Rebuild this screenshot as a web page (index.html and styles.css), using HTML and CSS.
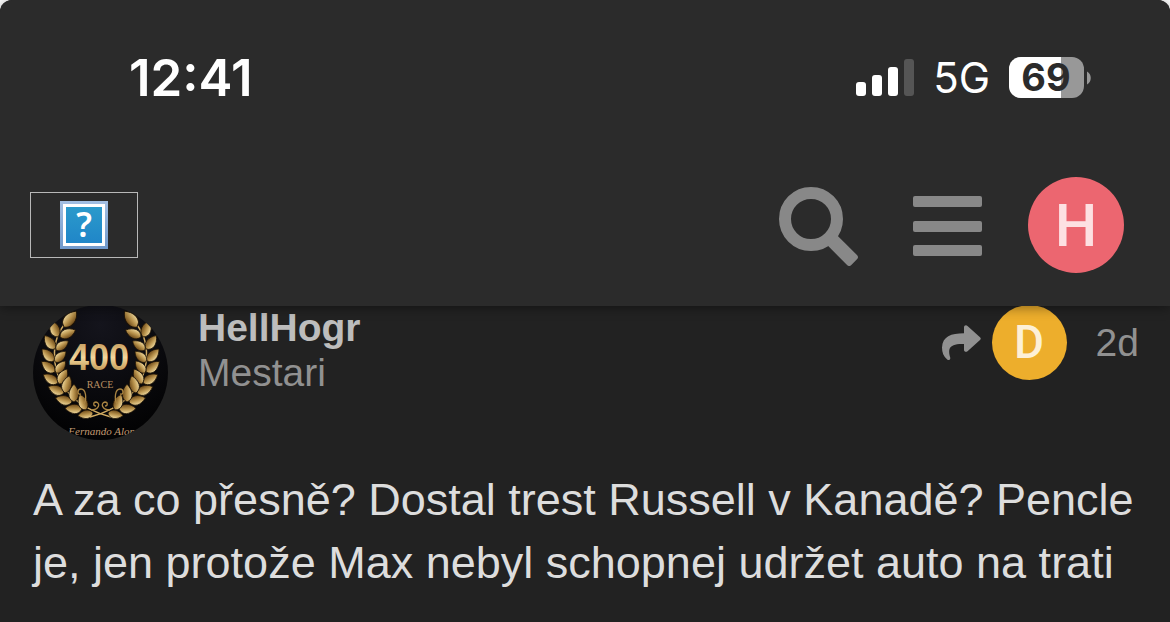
FILE: index.html
```html
<!DOCTYPE html>
<html lang="cs">
<head>
    <meta charset="UTF-8">
    <meta name="viewport" content="width=device-width, initial-scale=1.0">
    <title>HellHogr</title>
    <link rel="stylesheet" href="styles.css">
</head>
<body>
    <div class="page">
        <header class="header">
            <div class="status-bar">
                <span class="time">12:41</span>
                <div class="status-icons">
                    <svg class="signal" width="58" height="38" viewBox="0 0 58 38" aria-hidden="true">
                        <rect x="0" y="23" width="10" height="14" rx="3"/>
                        <rect x="16" y="16" width="10" height="21" rx="3"/>
                        <rect x="32" y="8" width="10" height="29" rx="3"/>
                        <rect class="signal-off" x="48" y="0" width="10" height="37" rx="3"/>
                    </svg>
                    <span class="network">5G</span>
                    <svg class="battery" width="82" height="42" viewBox="0 0 82 42">
                        <defs>
                            <clipPath id="batteryShape"><rect width="75" height="41" rx="12"/></clipPath>
                        </defs>
                        <g clip-path="url(#batteryShape)">
                            <rect width="75" height="41" fill="#989898"/>
                            <rect width="52" height="41" fill="#fff"/>
                        </g>
                        <path d="M78 14.500c5 2.500 5 10.500 0 13z" fill="#989898"/>
                        <text class="battery-level" x="37" y="34" text-anchor="middle">69</text>
                    </svg>
                </div>
            </div>
            <nav class="nav">
                <a class="logo" href="#" aria-label="Home">
                    <svg width="48" height="48" viewBox="0 0 48 48" aria-hidden="true">
                        <defs>
                            <linearGradient id="logoFrame" x1="0" y1="0" x2="0" y2="1">
                                <stop offset="0" stop-color="#a3bfe2"/>
                                <stop offset="1" stop-color="#7099cb"/>
                            </linearGradient>
                            <linearGradient id="logoFill" x1="0" y1="0" x2="0" y2="1">
                                <stop offset="0" stop-color="#2b9acb"/>
                                <stop offset="1" stop-color="#2086c8"/>
                            </linearGradient>
                        </defs>
                        <rect width="48" height="48" fill="url(#logoFrame)"/>
                        <rect x="3" y="3" width="42" height="42" fill="#fff"/>
                        <rect x="6" y="6" width="36" height="36" fill="url(#logoFill)"/>
                        <text class="logo-mark" x="24" y="36" text-anchor="middle">?</text>
                    </svg>
                </a>
                <div class="nav-actions">
                    <button class="icon-button" type="button" aria-label="Search">
                        <svg width="88" height="82" viewBox="0 0 88 82">
                            <circle cx="33" cy="35" r="26" fill="none" stroke="currentColor" stroke-width="12"/>
                            <rect x="29" y="-7" width="32" height="14" rx="3" transform="translate(33 35) rotate(45)" fill="currentColor"/>
                        </svg>
                    </button>
                    <button class="icon-button" type="button" aria-label="Menu">
                        <svg width="70" height="62" viewBox="0 0 70 62">
                            <rect x="1" y="2" width="69" height="11" rx="2" fill="currentColor"/>
                            <rect x="1" y="27" width="69" height="11" rx="2" fill="currentColor"/>
                            <rect x="1" y="51" width="69" height="11" rx="2" fill="currentColor"/>
                        </svg>
                    </button>
                    <button class="letter-avatar user" type="button">H</button>
                </div>
            </nav>
        </header>

        <article class="post">
            <div class="post-meta">
                <svg class="avatar" width="135" height="135" viewBox="0 0 135 135" role="img" aria-label="HellHogr">
                    <defs>
                        <clipPath id="avatarShape"><circle cx="67.500" cy="67.500" r="67.500"/></clipPath>
                        <clipPath id="captionShape"><rect x="32" y="115" width="71" height="20"/></clipPath>
                        <radialGradient id="avatarFill" cx=".5" cy=".15" r=".8">
                            <stop offset="0" stop-color="#14141c"/>
                            <stop offset="1" stop-color="#030304"/>
                        </radialGradient>
                        <linearGradient id="leafGold" x1="0" y1="0" x2="1" y2="0">
                            <stop offset="0" stop-color="#efd89c"/>
                            <stop offset=".5" stop-color="#b8924c"/>
                            <stop offset="1" stop-color="#6b4818"/>
                        </linearGradient>
                        <linearGradient id="numberGold" x1="0" y1="0" x2="0" y2="1">
                            <stop offset="0" stop-color="#b98a48"/>
                            <stop offset=".5" stop-color="#f2d79c"/>
                            <stop offset="1" stop-color="#a8752f"/>
                        </linearGradient>
                        <path id="leaf" d="M0 0C-7 -3 -6 -11 0 -17C6 -11 6 -3 0 0Z" fill="url(#leafGold)" stroke="#1d1307" stroke-width=".8"/>
                        <g id="branch">
                            <path d="M78 112C44 103 25 83 22 58C20 42 24 29 31 20" fill="none" stroke="#d1ab62" stroke-width="1.500"/>
                            <use href="#leaf" transform="translate(31 22) rotate(38) scale(1.200)"/>
                            <use href="#leaf" transform="translate(25 32) rotate(-22) scale(1.050)"/>
                            <use href="#leaf" transform="translate(27 32) rotate(66)"/>
                            <use href="#leaf" transform="translate(22 44) rotate(-38)"/>
                            <use href="#leaf" transform="translate(23 45) rotate(54) scale(.9)"/>
                            <use href="#leaf" transform="translate(21 56) rotate(-45)"/>
                            <use href="#leaf" transform="translate(22 57) rotate(46) scale(.9)"/>
                            <use href="#leaf" transform="translate(22 67) rotate(-52)"/>
                            <use href="#leaf" transform="translate(23 68) rotate(38) scale(.9)"/>
                            <use href="#leaf" transform="translate(25 78) rotate(-60)"/>
                            <use href="#leaf" transform="translate(26 79) rotate(28)"/>
                            <use href="#leaf" transform="translate(31 88) rotate(-68)"/>
                            <use href="#leaf" transform="translate(32 88) rotate(14) scale(1.050)"/>
                            <use href="#leaf" transform="translate(39 97) rotate(-76)"/>
                            <use href="#leaf" transform="translate(41 97) rotate(0) scale(1.050)"/>
                            <use href="#leaf" transform="translate(49 104) rotate(-88)"/>
                            <use href="#leaf" transform="translate(53 105) rotate(-22)"/>
                            <use href="#leaf" transform="translate(60 108) rotate(-100) scale(.9)"/>
                            <path d="M51 99C54 94 53 84 48 84C44 84 44 90 48 89M58 105C66 105 68 98 63 97C60 97 60 101 63 101" fill="none" stroke="#a98442" stroke-width="1.300"/>
                        </g>
                    </defs>
                    <g clip-path="url(#avatarShape)">
                        <rect width="135" height="135" fill="url(#avatarFill)"/>
                        <use href="#branch"/>
                        <use href="#branch" transform="translate(135 0) scale(-1 1)"/>
                        <text class="avatar-number" x="66" y="65" text-anchor="middle">400</text>
                        <text class="avatar-race" x="67" y="83" text-anchor="middle">RACE</text>
                        <g clip-path="url(#captionShape)">
                            <text class="avatar-caption" x="67" y="130" text-anchor="middle">y Fernando Alons</text>
                        </g>
                    </g>
                </svg>
                <div class="names">
                    <a class="username" href="#">HellHogr</a>
                    <span class="user-title">Mestari</span>
                </div>
                <div class="post-info">
                    <button class="reply-to" type="button" aria-label="Reply to D">
                        <svg width="40" height="36" viewBox="0 0 40 36">
                            <path d="M23 2.500C23 .5 25 -.3 26.500 1L39 12.200Q40.500 13.500 39 14.900L26.500 26.200C25 27.500 23 26.700 23 24.700V19C15 18.600 10 20 8.500 24C7.700 27 8.500 30 9.200 32.500C9.700 34.800 7.800 35.800 6.200 34.500C2.500 31.500 1 27.500 1 22.500C1.500 11.500 10 8.300 23 8.300Z" fill="currentColor"/>
                        </svg>
                        <span class="letter-avatar reply-user">D</span>
                    </button>
                    <a class="post-date" href="#">2d</a>
                </div>
            </div>
            <p class="post-text">A za co přesně? Dostal trest Russell v Kanadě? Pencle je, jen protože Max nebyl schopnej udržet auto na trati</p>
        </article>
    </div>
</body>
</html>
```
FILE: styles.css
```css
* {
    box-sizing: border-box;
}
body {
    margin: 0;
    background-color: #fff;
    font-family: "Liberation Sans", Arial, sans-serif;
}
button {
    border: none;
    padding: 0;
    background: none;
    font: inherit;
    cursor: pointer;
}
a {
    color: inherit;
    text-decoration: none;
}
svg {
    display: block;
}
.page {
    display: flex;
    flex-direction: column;
    min-height: 100vh;
    background-color: #222;
    border-radius: 12px 12px 0 0;
}
.header {
    position: sticky;
    top: 0;
    z-index: 1;
    background-color: #2b2b2b;
    border-radius: 12px 12px 0 0;
    box-shadow: 0 2px 12px rgba(0, 0, 0, 0.4);
}

/* status bar */
.status-bar {
    display: flex;
    justify-content: space-between;
    align-items: center;
    padding: 48px 79px 0 129px;
    color: #fff;
    font-family: Inter, sans-serif;
    line-height: 60px;
}
.time {
    font-size: 51px;
    font-weight: 600;
}
.status-icons {
    display: flex;
    align-items: center;
    gap: 19px;
}
.signal {
    fill: #fff;
}
.signal-off {
    fill: #555;
}
.network {
    font-size: 42px;
    font-weight: 400;
}
.battery {
    overflow: visible;
}
.battery-level {
    fill: #2b2b2b;
    font-family: Inter, sans-serif;
    font-size: 38px;
    font-weight: 700;
}

/* navigation */
.nav {
    display: flex;
    justify-content: space-between;
    align-items: center;
    padding: 69px 46px 33px 30px;
}
.logo {
    display: flex;
    justify-content: center;
    align-items: center;
    width: 108px;
    height: 66px;
    border: 1px solid #b8b8b8;
}
.logo-mark {
    fill: #fff;
    font-family: "Noto Sans", sans-serif;
    font-size: 34px;
    font-weight: 600;
}
.nav-actions {
    display: flex;
    align-items: center;
    gap: 46px;
}
.icon-button {
    color: #888;
}
.letter-avatar {
    display: flex;
    justify-content: center;
    align-items: center;
    border-radius: 50%;
    font-family: Roboto, sans-serif;
}
.user {
    width: 96px;
    height: 96px;
    background-color: #ec6670;
    color: #fde0e2;
    font-size: 60px;
    font-weight: 500;
}

/* post */
.post {
    flex: 1;
    margin-top: -1px;
    padding: 0 31px 28px 33px;
    border-bottom: 1px solid #1c1c1c;
}
.post-meta {
    display: flex;
    align-items: flex-start;
    gap: 30px;
    color: #919191;
    font-size: 39px;
    line-height: 45px;
}
.names {
    display: flex;
    flex: 1;
    flex-direction: column;
}
.username {
    color: #bdbdbd;
    font-weight: 700;
}
.post-info,
.reply-to {
    display: flex;
    align-items: center;
}
.post-info {
    gap: 29px;
}
.reply-to {
    gap: 11px;
    color: #919191;
}
.reply-user {
    width: 75px;
    height: 75px;
    background-color: #edae2c;
    color: #fdf0d6;
    font-size: 46px;
    font-weight: 500;
}
.avatar-number {
    fill: url(#numberGold);
    font-family: "Liberation Sans", sans-serif;
    font-size: 36px;
    font-weight: 700;
}
.avatar-race {
    fill: #b98f62;
    font-family: "Liberation Serif", serif;
    font-size: 10px;
}
.avatar-caption {
    fill: #c29a72;
    font-family: "Liberation Serif", serif;
    font-size: 11px;
    font-style: italic;
}
.post-text {
    margin: 28px 0 0;
    color: #ddd;
    font-size: 45px;
    line-height: 63px;
}
```
